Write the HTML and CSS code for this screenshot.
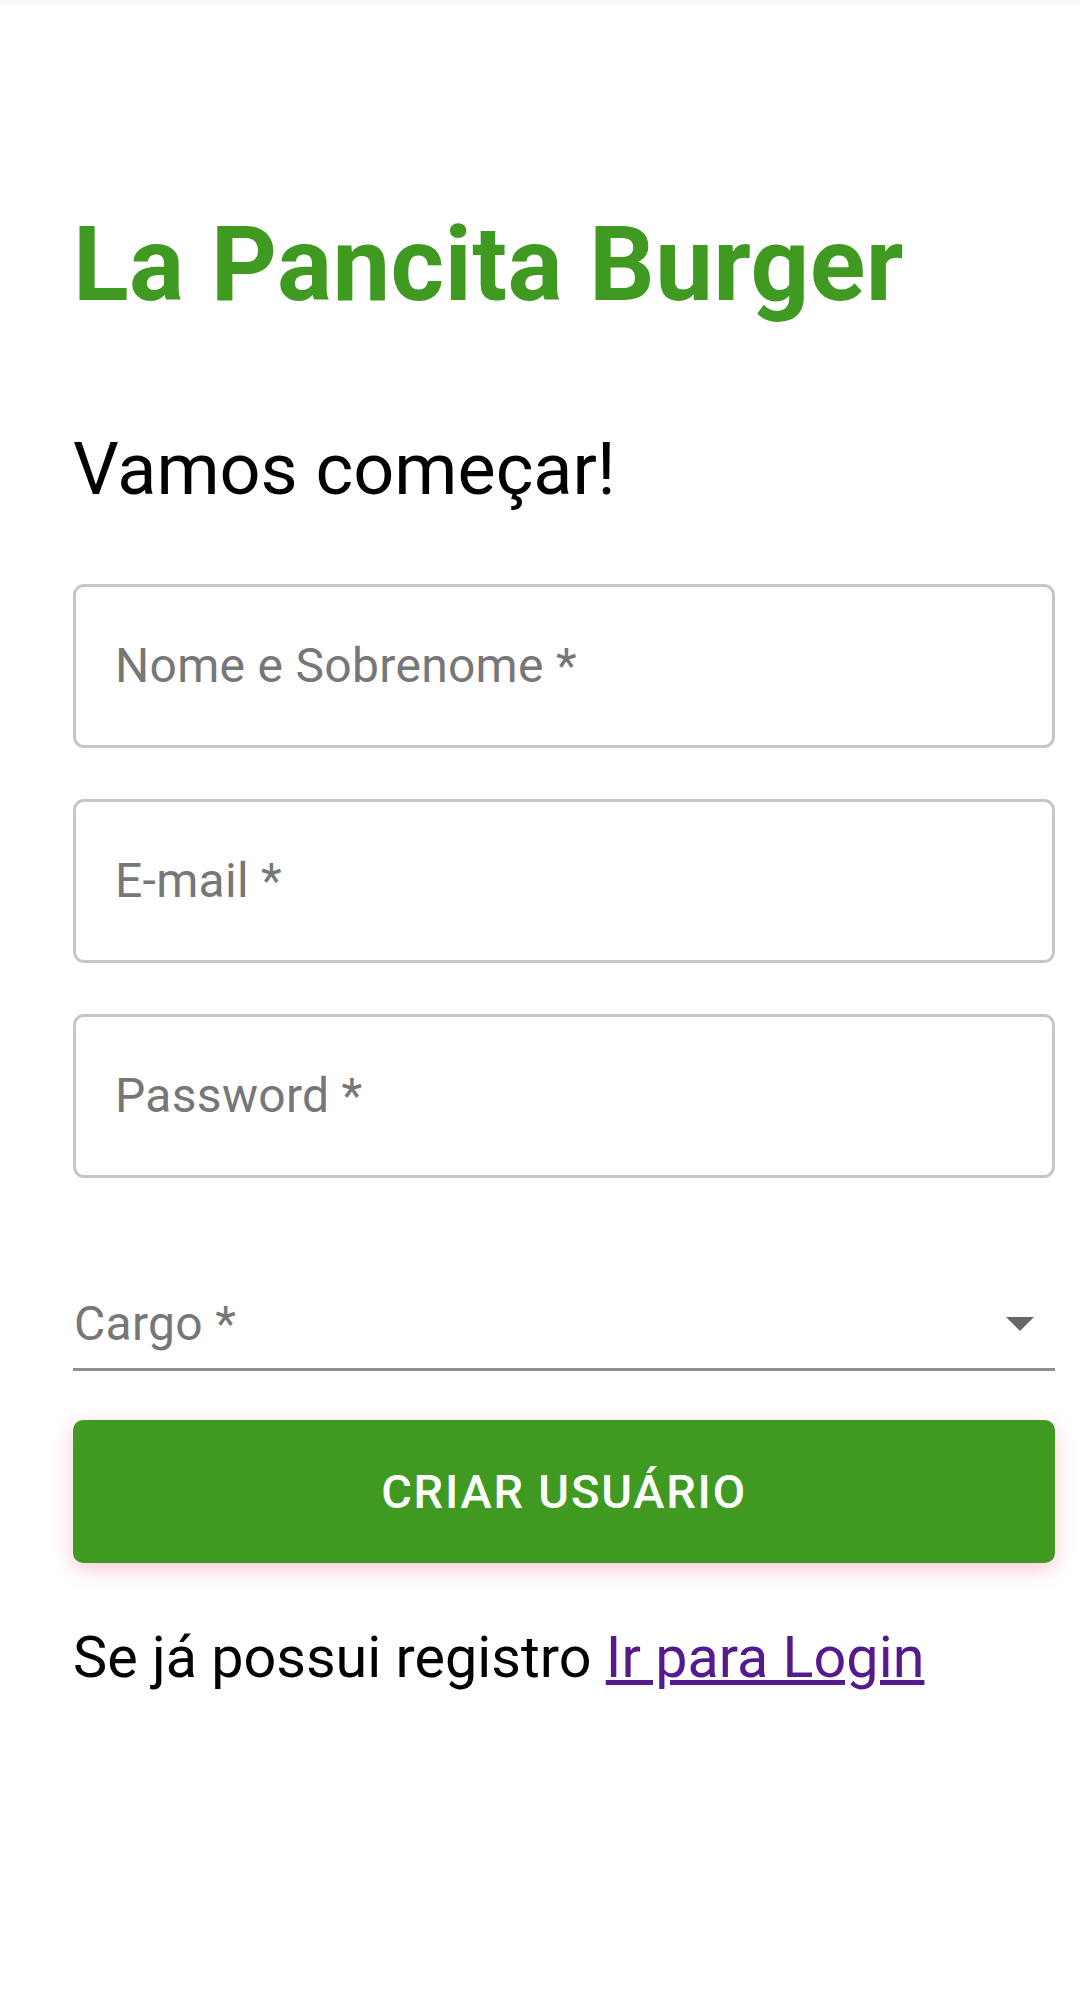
FILE: index.html
```html
<!DOCTYPE html>
<html lang="pt">
<head>
<meta charset="utf-8">
<title>La Pancita Burger</title>
<link rel="stylesheet" href="styles.css">
</head>
<body>
<div class="statusbar"></div>
<main class="page">
  <h1 class="brand">La Pancita Burger</h1>
  <h2 class="subtitle">Vamos começar!</h2>
  <form class="form">
    <div class="field"><span class="label">Nome e Sobrenome *</span></div>
    <div class="field"><span class="label">E-mail *</span></div>
    <div class="field"><span class="label">Password *</span></div>
    <div class="select">
      <span class="select-label">Cargo *</span>
      <svg class="arrow" width="28" height="14" viewBox="0 0 28 14"><path d="M0 0 H28 L14 14 Z" fill="#666"/></svg>
    </div>
    <button type="button" class="submit">Criar usuário</button>
  </form>
  <p class="footer-text">Se já possui registro <a href="#" class="link">Ir para Login</a></p>
</main>
</body>
</html>
```
FILE: styles.css
```css
html, body {
  margin: 0;
  padding: 0;
  background: #ffffff;
}
body {
  font-family: Roboto, "Liberation Sans", Arial, sans-serif;
  color: #000;
}
.statusbar {
  height: 5px;
  background: #f8f8f8;
}
.page {
  padding: 208px 25px 0 73px;
}
.brand {
  margin: 0;
  font-size: 103px;
  line-height: 103px;
  font-weight: 700;
  color: #409a22;
  letter-spacing: 0.4px;
}
.subtitle {
  margin: 118px 0 0 0;
  font-size: 72px;
  line-height: 72px;
  font-weight: 400;
  color: #000;
}
.form {
  margin-top: 78px;
  display: flex;
  flex-direction: column;
}
.field {
  box-sizing: border-box;
  height: 164px;
  border: 3px solid #c6c6c6;
  border-radius: 11px;
  display: flex;
  align-items: center;
  padding-left: 39px;
  margin-bottom: 51px;
}
.field:nth-child(3) {
  margin-bottom: 0;
}
.label {
  font-size: 48px;
  line-height: 48px;
  letter-spacing: 0.3px;
  color: #777;
}
.select {
  margin-top: 122px;
  display: flex;
  align-items: center;
  justify-content: space-between;
  padding: 0 21px 20px 1px;
  border-bottom: 3px solid #8e8e8e;
}
.select-label {
  font-size: 48px;
  line-height: 48px;
  letter-spacing: 0.3px;
  color: #777;
}
.arrow {
  display: block;
}
.submit {
  margin-top: 49px;
  height: 143px;
  border: none;
  border-radius: 10px;
  background: #409a22;
  color: #fff;
  font-family: Roboto, "Liberation Sans", Arial, sans-serif;
  font-size: 47px;
  font-weight: 500;
  letter-spacing: 1.8px;
  text-transform: uppercase;
  box-shadow: 0 6px 20px rgba(240, 60, 90, 0.28);
  cursor: pointer;
}
.footer-text {
  margin: 60px 0 0 0;
  font-size: 57.5px;
  line-height: 1.2;
  color: #000;
}
.link {
  color: #551a8b;
  text-decoration: underline;
}
```
